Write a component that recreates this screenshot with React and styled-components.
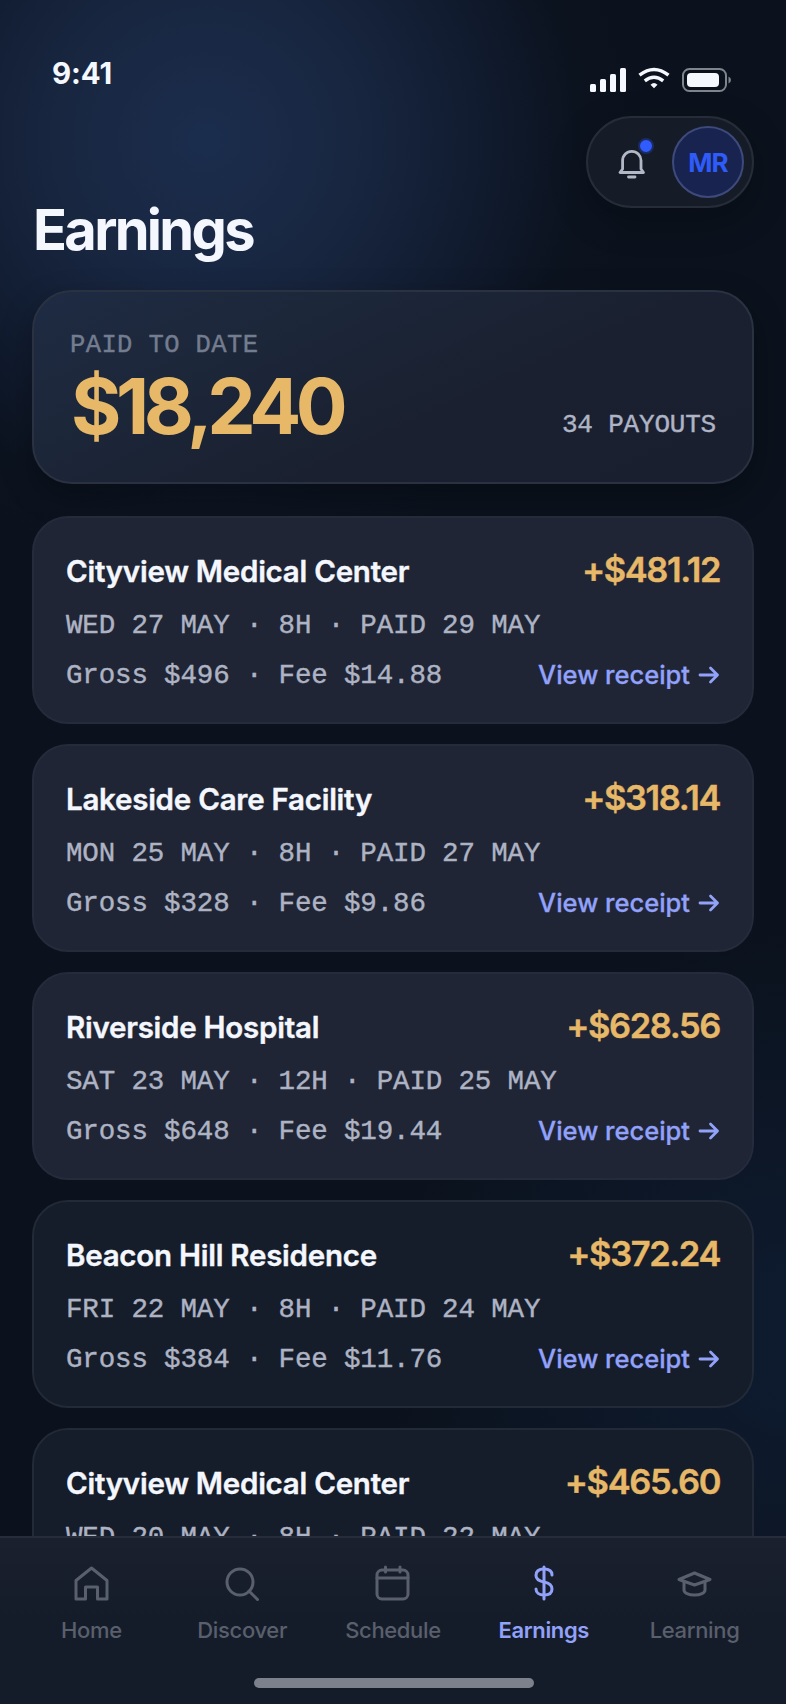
import React from "react";
import styled, { createGlobalStyle } from "styled-components";

const sans = `Inter, "Liberation Sans", sans-serif`;
const mono = `"Liberation Mono", monospace`;

const GlobalStyle = createGlobalStyle`
  *, *::before, *::after { box-sizing: border-box; }
  body { margin: 0; background: #0a111c; font-family: ${sans}; -webkit-font-smoothing: antialiased; }
`;

const Screen = styled.div`
  width: 786px;
  height: 1704px;
  overflow: hidden;
  display: flex;
  flex-direction: column;
  background:
    radial-gradient(circle 440px at 205px 140px, #1b2d4d 0%, #182640 34%, rgba(19, 31, 54, 0.75) 62%, rgba(14, 22, 38, 0.3) 84%, rgba(11, 17, 28, 0) 100%),
    radial-gradient(circle 420px at 800px 1340px, #0e1b30 0%, rgba(10, 17, 28, 0) 100%),
    #0b121d;
`;

const StatusBar = styled.div`
  height: 116px;
  flex: none;
  padding: 56px 54px 0 52px;
  display: flex;
  justify-content: space-between;
`;

const Clock = styled.span`
  font-size: 29.5px;
  line-height: 35px;
  font-weight: 700;
  letter-spacing: -0.1px;
  color: #f5f8ff;
`;

const StatusIcons = styled.svg`
  display: block;
  margin-top: 10px;
`;

const Header = styled.header`
  height: 174px;
  flex: none;
  padding: 0 32px;
  display: flex;
  justify-content: space-between;
  align-items: flex-start;
`;

const Title = styled.h1`
  margin: 82px 0 0 1px;
  font-size: 56px;
  line-height: 64px;
  font-weight: 700;
  letter-spacing: -2.7px;
  color: #f5f7ff;
`;

const ActionPill = styled.div`
  width: 168px;
  height: 92px;
  border-radius: 46px;
  border: 2px solid #262d38;
  background: #151c28;
  box-shadow: 0 12px 36px rgba(0, 0, 0, 0.25);
  display: flex;
  align-items: center;
  justify-content: flex-end;
  padding-right: 8px;
  gap: 16px;
`;

const BellButton = styled.div`
  width: 44px;
  height: 44px;
  position: relative;
  svg { display: block; }
`;

const Badge = styled.span`
  position: absolute;
  top: -2px;
  right: 2px;
  width: 16px;
  height: 16px;
  border-radius: 50%;
  border: 2px solid #1b2c63;
  background: #2f5bff;
`;

const Avatar = styled.div`
  width: 72px;
  height: 72px;
  border-radius: 50%;
  border: 2px solid #3d4a7c;
  background: #182350;
  color: #2f5bf8;
  font-size: 26px;
  font-weight: 700;
  letter-spacing: -0.8px;
  display: flex;
  align-items: center;
  justify-content: center;
`;

const Summary = styled.section`
  height: 194px;
  flex: none;
  margin: 0 32px 32px;
  padding: 36px 36px 0 37px;
  border-radius: 40px;
  border: 2px solid #2a3241;
  background: linear-gradient(155deg, #1f2b43 0%, #1c273a 28%, #1a202f 60%, #1a1f2f 100%);
  box-shadow: 0 12px 32px rgba(0, 0, 0, 0.3);
  display: flex;
  justify-content: space-between;
`;

const SummaryLabel = styled.div`
  font-family: ${mono};
  font-size: 25.5px;
  line-height: 36px;
  margin-bottom: -2px;
  margin-left: -1px;
  letter-spacing: 0.4px;
  -webkit-text-stroke: 0.4px currentColor;
  color: #747d8f;
`;

const SummaryTotal = styled.div`
  font-size: 77px;
  line-height: 88px;
  font-weight: 700;
  letter-spacing: -5.4px;
  color: #e6b868;
`;

const PayoutCount = styled.div`
  font-family: ${mono};
  font-size: 26px;
  line-height: 32px;
  margin-top: 81px;
  letter-spacing: -0.2px;
  -webkit-text-stroke: 0.4px currentColor;
  color: #aeb4c5;
`;

const PayoutList = styled.main`
  flex: 1;
  min-height: 0;
  overflow: hidden;
  padding: 0 32px;
  display: flex;
  flex-direction: column;
  gap: 20px;
`;

const Card = styled.article`
  height: 208px;
  flex: none;
  border-radius: 36px;
  border: 2px solid ${(p) => (p.$dim ? "#222937" : "#252b3a")};
  background: ${(p) => (p.$dim ? "#161d2a" : "#1f2534")};
  padding: 32px 32px 0;
`;

const CardRow = styled.div`
  height: ${(p) => p.$height}px;
  display: flex;
  justify-content: space-between;
  align-items: center;
`;

const Facility = styled.h2`
  margin: -2px 0 0;
  font-size: 29.5px;
  line-height: 44px;
  font-weight: 600;
  letter-spacing: -0.25px;
  color: #f5f7ff;
  -webkit-text-stroke: 0.4px currentColor;
`;

const Amount = styled.span`
  font-size: 34.5px;
  line-height: 40px;
  margin-top: -5px;
  font-weight: 600;
  letter-spacing: -1.4px;
  color: #e6b868;
  -webkit-text-stroke: 0.4px currentColor;
`;

const Meta = styled.span`
  font-family: ${mono};
  font-size: 27.5px;
  line-height: 36px;
  letter-spacing: -0.15px;
  -webkit-text-stroke: 0.4px currentColor;
  white-space: pre;
  color: #aeb3c4;
`;

const ReceiptLink = styled.a`
  display: flex;
  align-items: center;
  gap: 8px;
  margin-top: -2px;
  font-size: 25.5px;
  line-height: 36px;
  font-weight: 500;
  letter-spacing: 0;
  -webkit-text-stroke: 0.3px currentColor;
  color: #92a1fa;
`;

const TabBar = styled.nav`
  height: 168px;
  flex: none;
  border-top: 2px solid #262d39;
  background: linear-gradient(#1a202d, #151c29 50%, #151c29);
  display: flex;
  flex-direction: column;
  align-items: center;
`;

const Tabs = styled.div`
  width: 100%;
  height: 140px;
  padding: 24px 16px 0;
  display: flex;
`;

const Tab = styled.a`
  flex: 1;
  display: flex;
  flex-direction: column;
  align-items: center;
  gap: 10px;
  font-size: 22px;
  line-height: 28px;
  font-weight: ${(p) => (p.$active ? 600 : 500)};
  letter-spacing: -0.35px;
  color: ${(p) => (p.$active ? "#92a1fa" : "#595f6c")};
`;

const HomeIndicator = styled.div`
  width: 280px;
  height: 10px;
  margin-left: 2px;
  border-radius: 5px;
  background: #7d818b;
`;

const TabIcon = ({ children }) => (
  <svg width="44" height="44" viewBox="0 0 44 44" fill="none" stroke="currentColor"
    strokeWidth="3" strokeLinecap="round" strokeLinejoin="round">{children}</svg>
);

const tabs = [
  { label: "Home", icon: <path d="M7 18.500 22.500 6 38 18.500V37h-9.500V25h-12v12H7z" /> },
  { label: "Discover", icon: <><circle cx="20" cy="20" r="13" /><path d="m29 29 8.500 8.500" /></> },
  { label: "Schedule", icon: <><rect x="6" y="8" width="31" height="29" rx="5" /><path d="M6 16h31M14.500 5v5M29 5v5" /></> },
  { label: "Earnings", active: true, icon: <><path d="M22 5v32" /><path d="M30 13c0-4-3-6-8-6s-8 2-8 6.500c0 4 3 5.500 8 6.500s8 2.500 8 7-3 6-8 6-8-2.500-8-6" /></> },
  { label: "Learning", icon: <><path d="M6 17.500 21.500 11 37 17.500 21.500 23z" /><path d="M11 20v8c0 3 4.500 5 10.500 5S32 31 32 28v-8" /></> },
];

const payouts = [
  { name: "Cityview Medical Center", amount: "+$481.12", meta: "WED 27 MAY · 8H · PAID 29 MAY", fees: "Gross $496 · Fee $14.88" },
  { name: "Lakeside Care Facility", amount: "+$318.14", meta: "MON 25 MAY · 8H · PAID 27 MAY", fees: "Gross $328 · Fee $9.86" },
  { name: "Riverside Hospital", amount: "+$628.56", meta: "SAT 23 MAY · 12H · PAID 25 MAY", fees: "Gross $648 · Fee $19.44" },
  { name: "Beacon Hill Residence", amount: "+$372.24", meta: "FRI 22 MAY · 8H · PAID 24 MAY", fees: "Gross $384 · Fee $11.76", dim: true },
  { name: "Cityview Medical Center", amount: "+$465.60", meta: "WED 20 MAY · 8H · PAID 22 MAY", dim: true },
];

export default function App() {
  return (
    <>
      <GlobalStyle />
      <Screen>
        <StatusBar>
          <Clock>9:41</Clock>
          <StatusIcons width="142" height="28" viewBox="590 66 142 28">
            <g fill="#f5f8ff">
              <rect x="590" y="84" width="6" height="8" rx="1.500" />
              <rect x="600" y="79" width="6" height="13" rx="1.500" />
              <rect x="610" y="74" width="6" height="18" rx="1.500" />
              <rect x="620" y="68" width="6" height="24" rx="1.500" />
              <rect x="687" y="73" width="32" height="14" rx="4" />
              <path d="M650.500 84.700q3.500-3.600 7 0l-3.500 3.500z" />
            </g>
            <g fill="none" stroke="#f5f8ff" strokeWidth="3.400">
              <path d="M639.500 75.200q14.500-11.600 29 0" />
              <path d="M644.800 80.800q9.200-7.200 18.400 0" />
            </g>
            <rect x="683" y="69" width="43" height="22" rx="6.500" fill="none" stroke="#7f848d" strokeWidth="2" />
            <path d="M728.500 76.500q2.500 1 2.500 3.500t-2.500 3.500z" fill="#7f848d" />
          </StatusIcons>
        </StatusBar>
        <Header>
          <Title>Earnings</Title>
          <ActionPill>
            <BellButton>
              <svg width="44" height="44" viewBox="0 0 44 44" fill="none" stroke="#b3b8c6" strokeWidth="2.800" strokeLinecap="round" strokeLinejoin="round">
                <path d="M8 32.500h23.500l-2.500-3.500V20.500a9.200 9.200 0 0 0-18.400 0V29z" />
                <path d="M16.500 37h6.500" />
              </svg>
              <Badge />
            </BellButton>
            <Avatar>MR</Avatar>
          </ActionPill>
        </Header>
        <Summary>
          <div>
            <SummaryLabel>PAID TO DATE</SummaryLabel>
            <SummaryTotal>$18,240</SummaryTotal>
          </div>
          <PayoutCount>34 PAYOUTS</PayoutCount>
        </Summary>
        <PayoutList>
          {payouts.map((p, i) => (
            <Card key={i} $dim={p.dim}>
              <CardRow $height={44}>
                <Facility>{p.name}</Facility>
                <Amount>{p.amount}</Amount>
              </CardRow>
              <CardRow $height={63}>
                <Meta>{p.meta}</Meta>
              </CardRow>
              {p.fees && (
                <CardRow $height={38}>
                  <Meta>{p.fees}</Meta>
                  <ReceiptLink>
                    View receipt
                    <svg width="22" height="20" viewBox="0 0 22 20" fill="none" stroke="currentColor" strokeWidth="2.800" strokeLinecap="round" strokeLinejoin="round">
                      <path d="M2 10h17.500M12.500 3l7 7-7 7" />
                    </svg>
                  </ReceiptLink>
                </CardRow>
              )}
            </Card>
          ))}
        </PayoutList>
        <TabBar>
          <Tabs>
            {tabs.map((t) => (
              <Tab key={t.label} $active={t.active}>
                <TabIcon>{t.icon}</TabIcon>
                {t.label}
              </Tab>
            ))}
          </Tabs>
          <HomeIndicator />
        </TabBar>
      </Screen>
    </>
  );
}
